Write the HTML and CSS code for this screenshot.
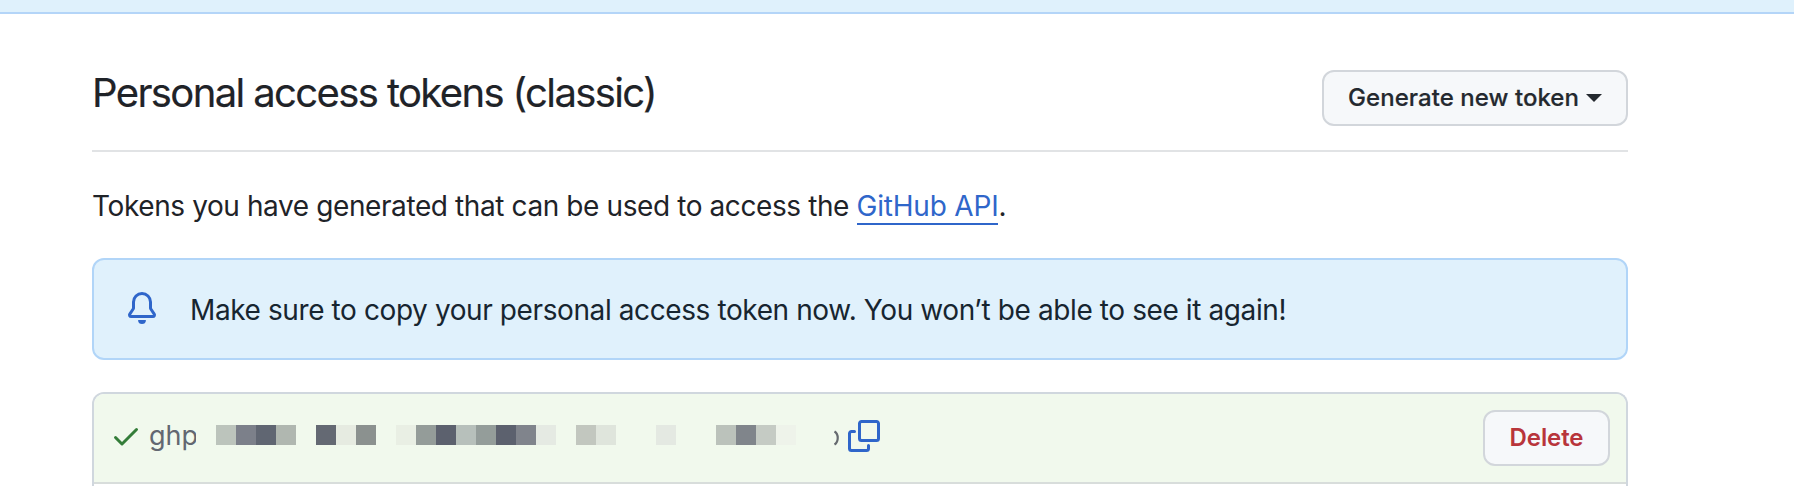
FILE: index.html
```html
<!DOCTYPE html>
<html lang="en">
<head>
<meta charset="utf-8">
<title>Personal access tokens (classic)</title>
<link rel="stylesheet" href="styles.css">
</head>
<body>
<div class="banner"></div>
<main class="content">
  <header class="subhead">
    <h1 class="title"><span>Personal access tokens (classic)</span></h1>
    <button class="btn btn-generate"><span>Generate new token</span><i class="caret"></i></button>
  </header>
  <p class="intro"><span>Tokens you have generated that can be used to access the </span><a class="link" href="#">GitHub API</a>.</p>
  <div class="flash">
    <svg class="icon bell" viewBox="0 0 16 16"><path d="M8 16a2 2 0 001.985-1.75c.017-.137-.097-.25-.235-.25h-3.5c-.138 0-.252.113-.235.25A2 2 0 008 16z"/><path fill-rule="evenodd" d="M8 1.5A3.5 3.5 0 004.5 5v2.947c0 .346-.102.683-.294.97l-1.703 2.556a.018.018 0 00-.003.01l.001.006c0 .002.002.004.004.006a.017.017 0 00.006.004l.007.001h10.964l.007-.001a.016.016 0 00.006-.004.016.016 0 00.004-.006l.001-.007a.017.017 0 00-.003-.01l-1.703-2.554a1.75 1.75 0 01-.294-.97V5A3.5 3.5 0 008 1.5zM3 5a5 5 0 0110 0v2.947c0 .05.015.098.042.139l1.703 2.555A1.518 1.518 0 0113.482 13H2.518a1.518 1.518 0 01-1.263-2.36l1.703-2.554A.25.25 0 003 7.947V5z"/></svg>
    <span class="flash-text">Make sure to copy your personal access token now. You won’t be able to see it again!</span>
  </div>
  <section class="tokens">
    <div class="token-row">
      <svg class="icon check" viewBox="0 0 16 16"><path d="M13.78 4.22a.75.75 0 010 1.06l-7.25 7.25a.75.75 0 01-1.06 0L2.22 9.28a.75.75 0 011.06-1.06L6 10.94l6.72-6.72a.75.75 0 011.06 0z"/></svg>
      <span class="prefix">ghp</span>
      <svg class="mosaic" viewBox="0 0 29 1" preserveAspectRatio="none" shape-rendering="crispEdges">
        <path fill="#bcc4bc" d="M0 0h1v1H0z"/><path fill="#7c808a" d="M1 0h1v1H1z"/><path fill="#606672" d="M2 0h1v1H2z"/><path fill="#b0b7b0" d="M3 0h1v1H3z"/>
        <path fill="#646973" d="M5 0h1v1H5z"/><path fill="#e6ebe1" d="M6 0h1v1H6z"/><path fill="#8b918f" d="M7 0h1v1H7z"/>
        <path fill="#e9efe4" d="M9 0h1v1H9z"/><path fill="#949c99" d="M10 0h1v1h-1z"/><path fill="#5c616e" d="M11 0h1v1h-1z"/><path fill="#b7c0bb" d="M12 0h1v1h-1z"/><path fill="#949d9a" d="M13 0h1v1h-1z"/><path fill="#5c616e" d="M14 0h1v1h-1z"/><path fill="#80848c" d="M15 0h1v1h-1z"/><path fill="#e5eae3" d="M16 0h1v1h-1z"/>
        <path fill="#c2c7bf" d="M18 0h1v1h-1z"/><path fill="#dfe5dc" d="M19 0h1v1h-1z"/>
        <path fill="#e4e9e2" d="M22 0h1v1h-1z"/>
        <path fill="#bbc2bb" d="M25 0h1v1h-1z"/><path fill="#80858b" d="M26 0h1v1h-1z"/><path fill="#c5cbc4" d="M27 0h1v1h-1z"/><path fill="#eef3ea" d="M28 0h1v1h-1z"/>
      </svg>
      <svg class="tail" viewBox="0 0 5 16"><path d="M.5 1.5C4.8 4 4.8 12 .5 14.5" fill="none" stroke="#656a6f" stroke-width="2.2"/></svg>
      <svg class="icon copy" viewBox="0 0 16 16"><path d="M0 6.75C0 5.784.784 5 1.75 5h1.5a.75.75 0 010 1.5h-1.5a.25.25 0 00-.25.25v7.5c0 .138.112.25.25.25h7.5a.25.25 0 00.25-.25v-1.5a.75.75 0 011.5 0v1.5A1.75 1.75 0 019.25 16h-7.5A1.75 1.75 0 010 14.25v-7.5z"/><path fill-rule="evenodd" d="M5 1.75C5 .784 5.784 0 6.75 0h7.5C15.216 0 16 .784 16 1.75v7.5A1.75 1.75 0 0114.25 11h-7.5A1.75 1.75 0 015 9.25v-7.5zm1.75-.25a.25.25 0 00-.25.25v7.5c0 .138.112.25.25.25h7.5a.25.25 0 00.25-.25v-7.5a.25.25 0 00-.25-.25h-7.5z"/></svg>
      <button class="btn btn-delete">Delete</button>
    </div>
  </section>
</main>
</body>
</html>
```
FILE: styles.css
```css
* { box-sizing: border-box; }
body {
  margin: 0;
  height: 486px;
  overflow: hidden;
  background: #fff;
  color: #1f2328;
  font: 28px/42px Inter, "Liberation Sans", sans-serif;
}
.banner { height: 14px; background: #dff1fc; border-bottom: 2px solid #b4d5f8; }
.content { width: 1536px; margin-left: 92px; }
.subhead {
  height: 138px;
  padding-top: 56px;
  border-bottom: 2px solid #e1e3e5;
  display: flex;
  justify-content: space-between;
  align-items: flex-start;
}
.title { margin: -7px 0 0; font-size: 40px; line-height: 60px; font-weight: 400; letter-spacing: -1.62px; white-space: nowrap; -webkit-text-stroke: 0.2px currentColor; }
.btn {
  height: 56px;
  padding: 0;
  border: 2px solid #d2d6db;
  border-radius: 12px;
  background: #f6f8fa;
  color: #24292f;
  font: 500 24px/48px Inter, "Liberation Sans", sans-serif;
  display: flex;
  align-items: center;
  justify-content: center;
  flex: none;
  white-space: nowrap;
}
.btn-generate { width: 306px; gap: 7px; letter-spacing: 0.05px; -webkit-text-stroke: 0.2px currentColor; }
.caret { border: 8px solid transparent; border-top-color: currentColor; border-bottom: 0; }
.intro { margin: 33px 0 31px; height: 42px; white-space: nowrap; letter-spacing: -0.4px; }
.link { color: #2f66ca; text-decoration: none; display: inline-block; height: 40px; border-bottom: 2px solid #2f66ca; letter-spacing: -0.2px; }
.flash {
  height: 102px;
  padding: 0 32px;
  border: 2px solid #b1d5f8;
  border-radius: 12px;
  background: #e0f1fc;
  display: flex;
  align-items: center;
  color: #172530;
}
.icon { width: 32px; height: 32px; flex: none; }
.bell { fill: #2f66ca; margin-bottom: 2px; }
.flash-text { margin: 2px 0 0 32px; white-space: nowrap; letter-spacing: -0.4px; }
.tokens { margin-top: 32px; height: 94px; border: 2px solid #d0d7de; border-bottom: 0; border-radius: 12px 12px 0 0; background: #fff; overflow: hidden; }
.token-row {
  height: 90px;
  padding: 0 16px 4px;
  border-bottom: 2px solid #d8dddb;
  background: #f1f9ed;
  display: flex;
  align-items: center;
}
.check { fill: #347d39; }
.prefix { width: 47px; margin-left: 7px; overflow: hidden; color: #636871; white-space: nowrap; font-size: 27px; letter-spacing: 0; }
.mosaic { width: 580px; height: 20px; margin: 0 0 2px 20px; flex: none; }
.tail { width: 5px; height: 16px; margin: 4px 0 0 38px; }
.copy { fill: #2f66ca; margin-left: 9px; }
.btn-delete { width: 127px; margin: 4px 0 0 auto; color: #b8353b; font-weight: 600; letter-spacing: -0.1px; }
```
